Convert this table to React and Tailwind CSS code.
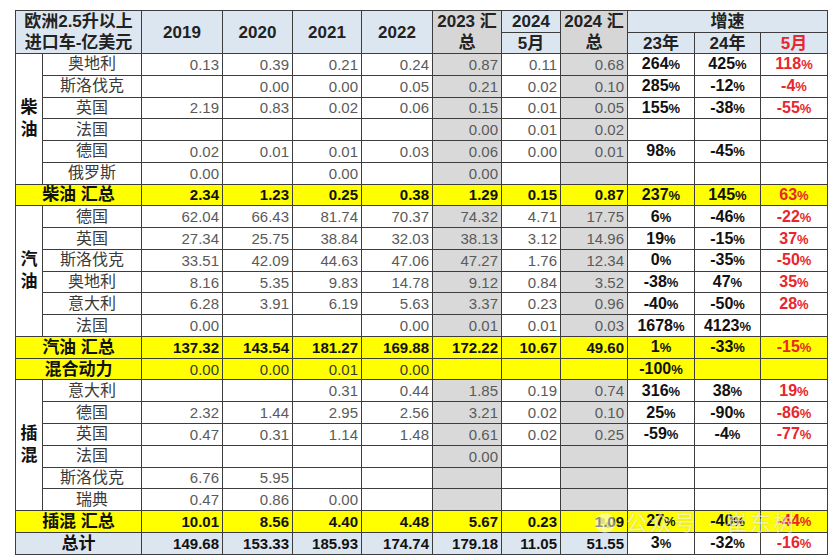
import React from 'react';

const FONT = { fontFamily: '"Liberation Sans", "Noto Sans CJK SC", sans-serif' };

const sections = [
   {
      label: ['柴', '油'],
      rows: [
         ['奥地利', '0.13', '0.39', '0.21', '0.24', '0.87', '0.11', '0.68', '264', '425', '118'],
         ['斯洛伐克', '', '0.00', '0.00', '0.05', '0.21', '0.02', '0.10', '285', '-12', '-4'],
         ['英国', '2.19', '0.83', '0.02', '0.06', '0.15', '0.01', '0.05', '155', '-38', '-55'],
         ['法国', '', '', '', '', '0.00', '0.01', '0.02', '', '', ''],
         ['德国', '0.02', '0.01', '0.01', '0.03', '0.06', '0.00', '0.01', '98', '-45', ''],
         ['俄罗斯', '0.00', '', '0.00', '', '0.00', '', '', '', '', ''],
      ],
      total: ['柴油 汇总', '2.34', '1.23', '0.25', '0.38', '1.29', '0.15', '0.87', '237', '145', '63'],
   },
   {
      label: ['汽', '油'],
      rows: [
         ['德国', '62.04', '66.43', '81.74', '70.37', '74.32', '4.71', '17.75', '6', '-46', '-22'],
         ['英国', '27.34', '25.75', '38.84', '32.03', '38.13', '3.12', '14.96', '19', '-15', '37'],
         ['斯洛伐克', '33.51', '42.09', '44.63', '47.06', '47.27', '1.76', '12.34', '0', '-35', '-50'],
         ['奥地利', '8.16', '5.35', '9.83', '14.78', '9.12', '0.84', '3.52', '-38', '47', '35'],
         ['意大利', '6.28', '3.91', '6.19', '5.63', '3.37', '0.23', '0.96', '-40', '-50', '28'],
         ['法国', '0.00', '', '', '0.00', '0.01', '0.01', '0.03', '1678', '4123', ''],
      ],
      total: ['汽油 汇总', '137.32', '143.54', '181.27', '169.88', '172.22', '10.67', '49.60', '1', '-33', '-15'],
   },
   {
      hybrid: ['混合动力', '0.00', '0.00', '0.01', '0.00', '', '', '', '-100', '', ''],
   },
   {
      label: ['插', '混'],
      rows: [
         ['意大利', '', '', '0.31', '0.44', '1.85', '0.19', '0.74', '316', '38', '19'],
         ['德国', '2.32', '1.44', '2.95', '2.56', '3.21', '0.02', '0.10', '25', '-90', '-86'],
         ['英国', '0.47', '0.31', '1.14', '1.48', '0.61', '0.02', '0.25', '-59', '-4', '-77'],
         ['法国', '', '', '', '', '0.00', '', '', '', '', ''],
         ['斯洛伐克', '6.76', '5.95', '', '', '', '', '', '', '', ''],
         ['瑞典', '0.47', '0.86', '0.00', '', '', '', '', '', '', ''],
      ],
      total: ['插混 汇总', '10.01', '8.56', '4.40', '4.48', '5.67', '0.23', '1.09', '27', '-40', '-44'],
   },
];

const grandTotal = ['总计', '149.68', '153.33', '185.93', '174.74', '179.18', '11.05', '51.55', '3', '-32', '-16'];

const cell = 'border-r border-b border-[#3d3d3d] flex items-center';

function Pct({ value, red, bg }) {
   return (
      <div className={`${cell} ${bg} justify-center font-bold text-[16px] ${red ? 'text-[#e8262c]' : 'text-[#111]'}`}>
         {value !== '' && (
            <span>
               {value}
               <span className="text-[13px]">%</span>
            </span>
         )}
      </div>
   );
}

function Numbers({ values, kind }) {
   return values.map((v, i) => {
      let bg = 'bg-white';
      if (kind === 'data' && (i === 4 || i === 6)) bg = 'bg-[#d9d9d9]';
      if (kind === 'sum' || kind === 'hybrid') bg = 'bg-[#ffff00]';
      if (kind === 'total') bg = 'bg-[#dce6f1]';
      const weight =
         kind === 'sum' || kind === 'total'
            ? 'font-bold text-[#111]'
            : kind === 'hybrid'
              ? 'text-[#3a3a3a]'
              : 'text-[#5a5a5a]';
      return (
         <div key={i} className={`${cell} ${bg} ${weight} justify-end pr-[3px] text-[15px]`}>
            {v}
         </div>
      );
   });
}

function Percents({ values, kind }) {
   const bg = kind === 'sum' || kind === 'hybrid' ? 'bg-[#ffff00]' : 'bg-white';
   return values.map((v, i) => <Pct key={i} value={v} red={i === 2} bg={bg} />);
}

function LabelRow({ row, kind }) {
   const bg = kind === 'total' ? 'bg-[#dce6f1]' : 'bg-[#ffff00]';
   return (
      <>
         <div className={`${cell} ${bg} col-span-2 justify-center font-bold text-[17px] text-[#111]`}>
            {row[0]}
         </div>
         <Numbers values={row.slice(1, 8)} kind={kind} />
         <Percents values={row.slice(8)} kind={kind} />
      </>
   );
}

export default function App() {
   const head = 'bg-[#dce6f1]';
   const headGrey = 'bg-[#d6d6d6]';

   return (
      <div className="relative w-[840px] h-[560px] bg-white" style={FONT}>
         <div className="pt-[10px] pl-[15px]">
            <div className="grid grid-cols-[27px_99px_81px_70px_69px_71px_69px_59px_67px_67px_66px_67px] grid-rows-[22px_21px_repeat(23,21.78px)] w-fit border-l border-t border-[#3d3d3d] leading-none">
               {/* header */}
               <div className={`${cell} ${head} col-span-2 row-span-2 flex-col justify-center font-bold text-[17px] leading-[21px] text-[#222]`}>
                  <span>欧洲2.5升以上</span>
                  <span>进口车-亿美元</span>
               </div>
               {['2019', '2020', '2021', '2022'].map((y) => (
                  <div key={y} className={`${cell} ${head} row-span-2 justify-center font-bold text-[17px] text-[#222]`}>
                     {y}
                  </div>
               ))}
               <div className={`${cell} ${headGrey} row-span-2 flex-col justify-center font-bold text-[17px] leading-[21px] text-[#222]`}>
                  <span>2023 汇</span>
                  <span>总</span>
               </div>
               <div className={`${cell} ${head} justify-center font-bold text-[17px] text-[#222]`}>2024</div>
               <div className={`${cell} ${headGrey} row-span-2 flex-col justify-center font-bold text-[17px] leading-[21px] text-[#222]`}>
                  <span>2024 汇</span>
                  <span>总</span>
               </div>
               <div className={`${cell} ${head} col-span-3 justify-center font-bold text-[17px] text-[#222]`}>增速</div>
               <div className={`${cell} ${head} col-start-8 justify-center font-bold text-[17px] text-[#222]`}>5月</div>
               <div className={`${cell} ${head} col-start-10 justify-center font-bold text-[17px] text-[#222]`}>23年</div>
               <div className={`${cell} ${head} justify-center font-bold text-[17px] text-[#222]`}>24年</div>
               <div className={`${cell} ${head} justify-center font-bold text-[17px] text-[#e8262c]`}>5月</div>

               {sections.map((s, si) => {
                  if (s.hybrid) return <LabelRow key={si} row={s.hybrid} kind="hybrid" />;
                  return (
                     <React.Fragment key={si}>
                        <div className={`${cell} row-span-6 col-start-1 flex-col justify-center font-bold text-[17px] leading-[22px] text-[#111] bg-white`}>
                           <span>{s.label[0]}</span>
                           <span>{s.label[1]}</span>
                        </div>
                        {s.rows.map((r, ri) => (
                           <React.Fragment key={ri}>
                              <div className={`${cell} col-start-2 justify-center text-[16px] text-[#3a3a3a] bg-white`}>
                                 {r[0]}
                              </div>
                              <Numbers values={r.slice(1, 8)} kind="data" />
                              <Percents values={r.slice(8)} kind="data" />
                           </React.Fragment>
                        ))}
                        <LabelRow row={s.total} kind="sum" />
                     </React.Fragment>
                  );
               })}
               <LabelRow row={grandTotal} kind="total" />
            </div>
         </div>

         {/* watermark */}
         <div className="absolute left-[594px] top-[507px] flex items-center gap-[10px] text-white/65 text-[21px] [text-shadow:0_0_2px_rgba(0,0,0,0.18)]">
            <svg width="22" height="22" viewBox="0 0 22 22" className="opacity-70">
               <circle cx="11" cy="11" r="10" fill="rgba(255,255,255,0.75)" />
               <circle cx="8" cy="9" r="3.2" fill="rgba(180,180,180,0.6)" />
               <circle cx="14" cy="13" r="3" fill="rgba(180,180,180,0.6)" />
            </svg>
            <span className="tracking-[3px]">公众号 · 崔东树</span>
         </div>
      </div>
   );
}
